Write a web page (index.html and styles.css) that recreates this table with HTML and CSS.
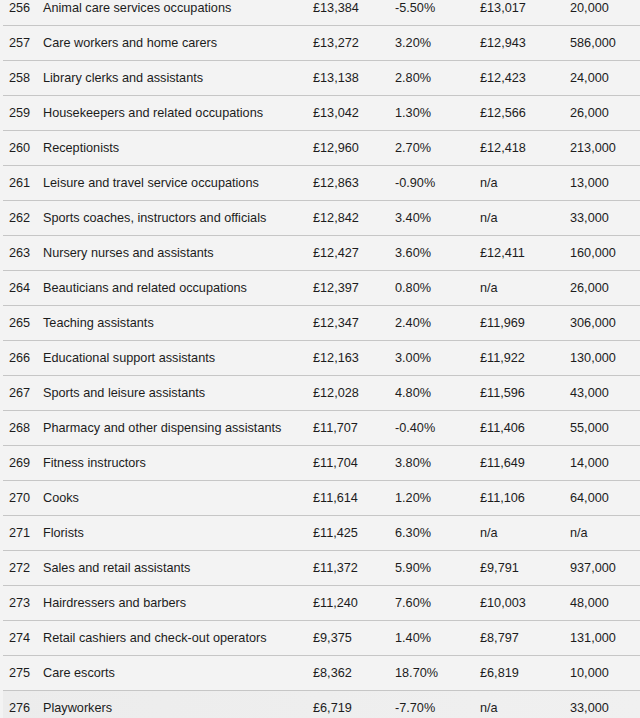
FILE: index.html
```html
<!DOCTYPE html>
<html>
<head>
<meta charset="utf-8">
<link rel="stylesheet" href="styles.css">
</head>
<body>
<div class="table">
  <div class="row"><span class="rank">256</span><span>Animal care services occupations</span><span>£13,384</span><span>-5.50%</span><span>£13,017</span><span>20,000</span></div>
  <div class="row"><span class="rank">257</span><span>Care workers and home carers</span><span>£13,272</span><span>3.20%</span><span>£12,943</span><span>586,000</span></div>
  <div class="row"><span class="rank">258</span><span>Library clerks and assistants</span><span>£13,138</span><span>2.80%</span><span>£12,423</span><span>24,000</span></div>
  <div class="row"><span class="rank">259</span><span>Housekeepers and related occupations</span><span>£13,042</span><span>1.30%</span><span>£12,566</span><span>26,000</span></div>
  <div class="row"><span class="rank">260</span><span>Receptionists</span><span>£12,960</span><span>2.70%</span><span>£12,418</span><span>213,000</span></div>
  <div class="row"><span class="rank">261</span><span>Leisure and travel service occupations</span><span>£12,863</span><span>-0.90%</span><span>n/a</span><span>13,000</span></div>
  <div class="row"><span class="rank">262</span><span>Sports coaches, instructors and officials</span><span>£12,842</span><span>3.40%</span><span>n/a</span><span>33,000</span></div>
  <div class="row"><span class="rank">263</span><span>Nursery nurses and assistants</span><span>£12,427</span><span>3.60%</span><span>£12,411</span><span>160,000</span></div>
  <div class="row"><span class="rank">264</span><span>Beauticians and related occupations</span><span>£12,397</span><span>0.80%</span><span>n/a</span><span>26,000</span></div>
  <div class="row"><span class="rank">265</span><span>Teaching assistants</span><span>£12,347</span><span>2.40%</span><span>£11,969</span><span>306,000</span></div>
  <div class="row"><span class="rank">266</span><span>Educational support assistants</span><span>£12,163</span><span>3.00%</span><span>£11,922</span><span>130,000</span></div>
  <div class="row"><span class="rank">267</span><span>Sports and leisure assistants</span><span>£12,028</span><span>4.80%</span><span>£11,596</span><span>43,000</span></div>
  <div class="row"><span class="rank">268</span><span>Pharmacy and other dispensing assistants</span><span>£11,707</span><span>-0.40%</span><span>£11,406</span><span>55,000</span></div>
  <div class="row"><span class="rank">269</span><span>Fitness instructors</span><span>£11,704</span><span>3.80%</span><span>£11,649</span><span>14,000</span></div>
  <div class="row"><span class="rank">270</span><span>Cooks</span><span>£11,614</span><span>1.20%</span><span>£11,106</span><span>64,000</span></div>
  <div class="row"><span class="rank">271</span><span>Florists</span><span>£11,425</span><span>6.30%</span><span>n/a</span><span>n/a</span></div>
  <div class="row"><span class="rank">272</span><span>Sales and retail assistants</span><span>£11,372</span><span>5.90%</span><span>£9,791</span><span>937,000</span></div>
  <div class="row"><span class="rank">273</span><span>Hairdressers and barbers</span><span>£11,240</span><span>7.60%</span><span>£10,003</span><span>48,000</span></div>
  <div class="row"><span class="rank">274</span><span>Retail cashiers and check-out operators</span><span>£9,375</span><span>1.40%</span><span>£8,797</span><span>131,000</span></div>
  <div class="row"><span class="rank">275</span><span>Care escorts</span><span>£8,362</span><span>18.70%</span><span>£6,819</span><span>10,000</span></div>
  <div class="row last"><span class="rank">276</span><span>Playworkers</span><span>£6,719</span><span>-7.70%</span><span>n/a</span><span>33,000</span></div>
</div>
</body>
</html>
```
FILE: styles.css
```css
html, body {
  margin: 0;
  padding: 0;
  background: #f3f3f3;
  overflow: hidden;
}
.table {
  margin-top: -9px;
  margin-left: 3px;
  font-family: "Liberation Sans", Arial, sans-serif;
  font-size: 12.7px;
  color: #1c1c1c;
}
.row {
  display: grid;
  grid-template-columns: 40px 270px 82px 85px 90px 1fr;
  height: 34px;
  align-items: center;
  border-bottom: 1px solid #c6c6c6;
}
.row span {
  white-space: nowrap;
}
.rank {
  padding-left: 6px;
}
.last {
  background: linear-gradient(to right, #ececec, #f0f0f0);
}
```
